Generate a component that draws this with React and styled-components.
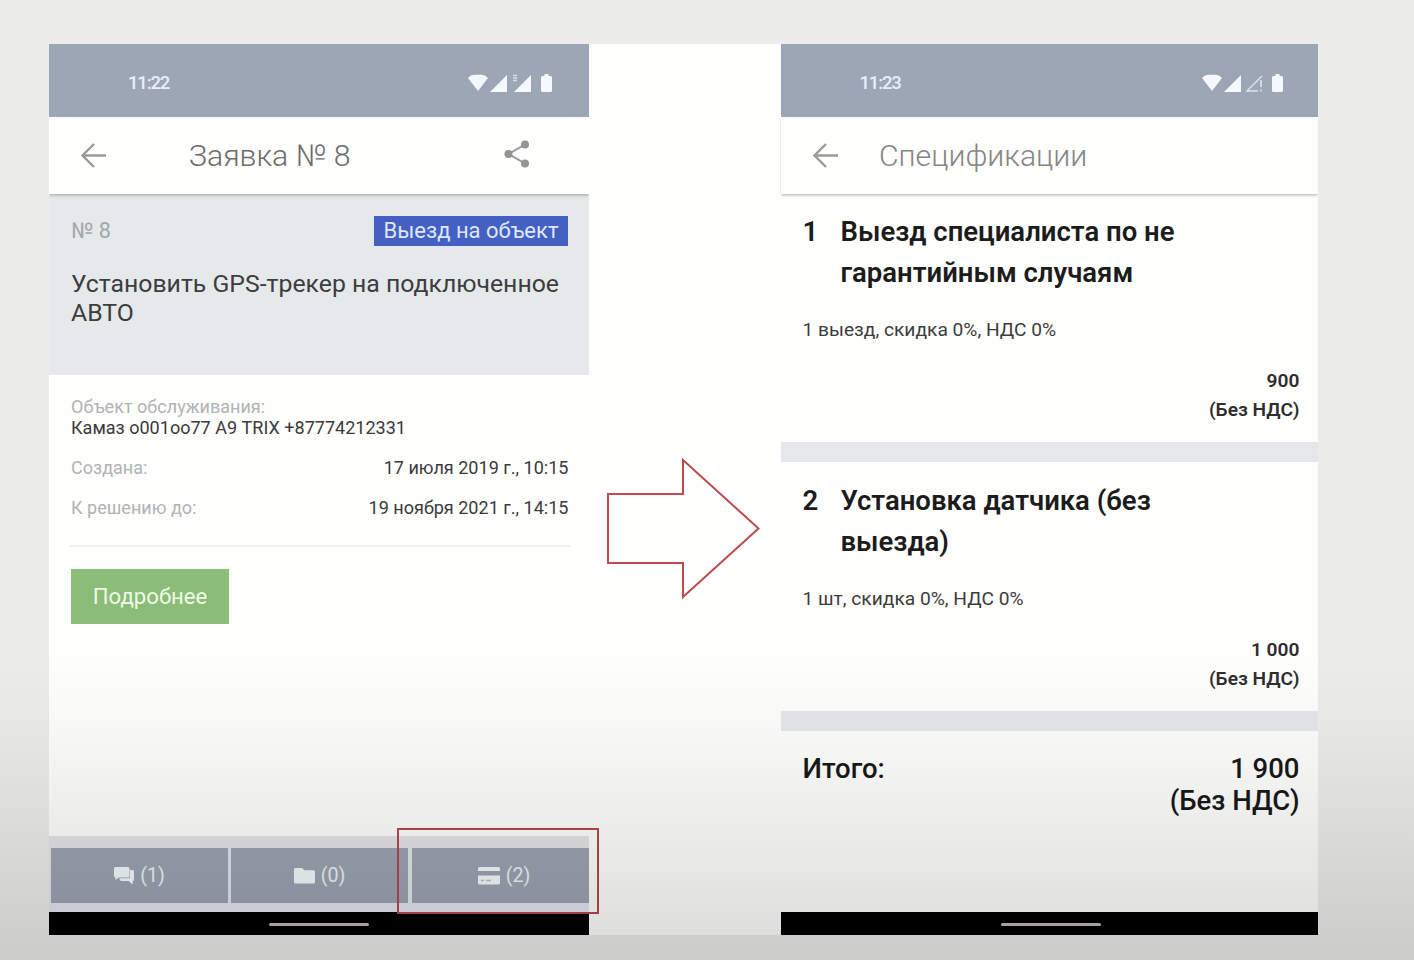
import React from "react";
import styled, { createGlobalStyle } from "styled-components";

const GlobalStyle = createGlobalStyle`
  * { box-sizing: border-box; }
  html, body { margin: 0; padding: 0; }
  body { font-family: Roboto, "Noto Sans", sans-serif; background: #ececeb; overflow: hidden; }
`;

const Stage = styled.main`
  position: relative;
  width: 1414px;
  height: 960px;
  padding: 44px 96px 25px 49px;
  background: #ececeb;
`;

const Shade = styled.div`
  position: absolute;
  inset: 0;
  pointer-events: none;
  background: linear-gradient(
    to bottom,
    rgba(0, 0, 0, 0) 650px,
    rgba(0, 0, 0, 0.015) 700px,
    rgba(0, 0, 0, 0.035) 750px,
    rgba(0, 0, 0, 0.08) 840px,
    rgba(0, 0, 0, 0.115) 910px,
    rgba(0, 0, 0, 0.137) 960px
  );
`;

const Slide = styled.div`
  display: grid;
  grid-template-columns: 540px 191.5px 537.5px;
  width: 1269px;
  height: 891px;
  background: #fefefd;
`;

const Phone = styled.section`
  display: flex;
  flex-direction: column;
  height: 891px;
  min-width: 0;
`;

const StatusBar = styled.div`
  display: flex;
  align-items: center;
  justify-content: space-between;
  flex: none;
  height: 73px;
  padding: 4px ${(p) => p.$right}px 0 79px;
  background: #9da6b5;
`;

const Clock = styled.span`
  font-size: 18.5px;
  line-height: 24px;
  font-weight: 500;
  letter-spacing: -1.15px;
  color: #e6f0fc;
`;

const StatusIcon = styled.svg`
  display: block;
  overflow: visible;
`;

const AppBar = styled.header`
  position: relative;
  display: flex;
  align-items: center;
  flex: none;
  height: 77px;
  padding: 0 59px 0 31px;
  background: #fefefd;
  box-shadow: 0 1px 3px rgba(70, 70, 60, 0.45);
  clip-path: inset(0 0 -8px 0);
`;

const AppTitle = styled.h1`
  flex: 1;
  margin: 0 0 0 ${(p) => p.$gap}px;
  font-size: 30.2px;
  line-height: 40px;
  font-weight: 300;
  color: ${(p) => p.$color};
`;

const Summary = styled.div`
  flex: none;
  height: 181px;
  padding: 22px 21px 0 22px;
  background: #e6e9ea;
`;

const SummaryTop = styled.div`
  display: flex;
  align-items: center;
  justify-content: space-between;
  height: 30px;
`;

const TicketNo = styled.span`
  font-size: 21.7px;
  line-height: 30px;
  color: #a4a7a9;
`;

const Badge = styled.span`
  height: 30px;
  padding: 0 9.5px;
  font-size: 22px;
  line-height: 30px;
  color: #dfe6fa;
  background: #4460c3;
`;

const Description = styled.p`
  margin: 23px 0 0;
  font-size: 24.8px;
  line-height: 29px;
  white-space: nowrap;
  color: #3b3d3f;
`;

const Details = styled.div`
  flex: 1;
  padding: 21px 20.5px 0 22px;
`;

const Label = styled.span`
  font-size: 18.05px;
  line-height: 21px;
  color: #b1b3b5;
`;

const Value = styled.span`
  font-size: 18.05px;
  line-height: 21px;
  color: #3a3a3c;
`;

const Stack = styled.div`
  display: flex;
  flex-direction: column;
`;

const DetailRow = styled.div`
  display: flex;
  justify-content: space-between;
  margin-top: 19px;
`;

const Divider = styled.hr`
  height: 2px;
  margin: 27px -1px 22px -1px;
  border: 0;
  background: #f2f2f2;
`;

const MoreButton = styled.button`
  display: block;
  width: 158px;
  height: 55px;
  padding: 0;
  border: 0;
  font: 400 22.2px/55px Roboto, "Noto Sans", sans-serif;
  color: #eefbe6;
  background: #8bbc78;
`;

const Tabs = styled.nav`
  display: grid;
  grid-template-columns: 177px 177px 177px;
  column-gap: 3px;
  flex: none;
  height: 76px;
  padding: 12px 0 9px 2px;
  background: linear-gradient(to bottom, #e2e4e5, #e2e6ed);
`;

const Tab = styled.div`
  display: flex;
  align-items: center;
  justify-content: center;
  gap: 5px;
  margin-left: ${(p) => p.$shift || 0}px;
  margin-right: ${(p) => -(p.$shift || 0)}px;
  padding-left: ${(p) => p.$indent || 0}px;
  font-size: 19.6px;
  color: #eef2f6;
  background: #9ca4b2;
`;

const NavBar = styled.footer`
  display: flex;
  align-items: center;
  justify-content: center;
  flex: none;
  height: 23px;
  padding-left: ${(p) => p.$offset || 0}px;
  background: #000;
`;

const NavPill = styled.i`
  width: 100px;
  height: 3px;
  margin-top: 2px;
  border-radius: 2px;
  background: #bcb6b6;
`;

const ArrowCell = styled.div`
  display: flex;
  justify-content: center;
  padding: 413px 4px 0 0;
`;

const Highlight = styled.div`
  position: absolute;
  left: 397px;
  top: 828px;
  width: 202px;
  height: 86px;
  border: 2px solid #b4474e;
`;

const SpecItem = styled.article`
  display: flex;
  flex-direction: column;
  flex: none;
  height: ${(p) => p.$height}px;
  padding: ${(p) => p.$top}px 18.5px 0 22px;
`;

const SpecHead = styled.div`
  display: grid;
  grid-template-columns: 38px 1fr;
  font-size: 27.5px;
  line-height: 41px;
  font-weight: 600;
  color: #1c1c1c;
`;

const SpecMeta = styled.div`
  margin-top: 25px;
  font-size: 19.2px;
  line-height: 24px;
  color: #3c3c3c;
`;

const SpecPrice = styled.div`
  margin-top: 25px;
  font-size: 19.2px;
  line-height: 28.5px;
  font-weight: 600;
  text-align: right;
  color: #2e2e2e;
`;

const Band = styled.div`
  flex: none;
  height: 20px;
  background: #e5e8ea;
`;

const Total = styled.div`
  display: flex;
  justify-content: space-between;
  flex: 1;
  padding: 22px 18.5px 0 22px;
  font-size: 27.5px;
  line-height: 32px;
  font-weight: 500;
  color: #181818;
`;

const TotalSum = styled.div`
  text-align: right;
`;

const BackIcon = () => (
  <svg width="27" height="27" viewBox="0 0 27 27" fill="none" stroke="#9b9b9a" strokeWidth="2.4">
    <path d="M26 13.5H3M14 2L2.5 13.5L14 25" />
  </svg>
);

const ShareMark = styled.svg`
  margin-bottom: 4px;
`;

const ShareIcon = () => (
  <ShareMark width="26" height="28" viewBox="0 0 26 28" fill="#949494">
    <path d="M21 4.5L4.5 14L21 23.5" fill="none" stroke="#949494" strokeWidth="2" />
    <circle cx="21" cy="4.5" r="4" />
    <circle cx="4.5" cy="14" r="4" />
    <circle cx="21" cy="23.5" r="4" />
  </ShareMark>
);

const WIFI = "M0 4Q3 0.8 6 0.8H14Q17 0.8 20 4L10 17Z";
const BATTERY = "M3.5 2V0H7.5V2H9.5Q11 2 11 3.5V16.5Q11 18 9.5 18H1.5Q0 18 0 16.5V3.5Q0 2 1.5 2Z";

const StatusLeft = () => (
  <StatusIcon width="84" height="18" viewBox="0 0 84 18" fill="#f3f9ff">
    <path d={WIFI} />
    <path d="M22 18L39 1V18Z" />
    <path d="M46 18L63 1V18Z" />
    <path d="M45 1.5H49M45 4H49M45 6.5H49" stroke="#d7dfeb" strokeWidth="1.5" />
    <path d={BATTERY} transform="translate(73 0)" />
  </StatusIcon>
);

const StatusRight = () => (
  <StatusIcon width="81" height="18" viewBox="0 0 81 18" fill="#f3f9ff">
    <path d={WIFI} />
    <path d="M22 18L39 1V18Z" />
    <path d="M60 2L45 17H56" fill="none" stroke="#dde5f0" strokeWidth="1.4" />
    <path d="M59 6V13M59 15.5V17.5" stroke="#dde5f0" strokeWidth="1.6" />
    <path d={BATTERY} transform="translate(70 0)" />
  </StatusIcon>
);

const ChatIcon = () => (
  <svg width="21" height="18" viewBox="0 0 21 18" fill="#f5fafc">
    <path d="M1.5 0H14Q15.5 0 15.5 1.5V9Q15.5 10.5 14 10.5H5L1.5 13V10.5Q0 10.5 0 9V1.5Q0 0 1.5 0Z" />
    <path d="M16 3H18.5Q20 3 20 4.5V12.5Q20 14 18.8 14V17.5L14.5 14H7Q5.5 14 5.5 11.2H15Q16 11.2 16 10Z" />
  </svg>
);

const FolderIcon = () => (
  <svg width="22" height="16" viewBox="0 0 22 16" fill="#f5fafc">
    <path d="M1.5 0H8L10.5 2.3H19.5Q21 2.3 21 3.8V14Q21 15.5 19.5 15.5H1.5Q0 15.5 0 14V1.5Q0 0 1.5 0Z" />
  </svg>
);

const CardIcon = () => (
  <svg width="23" height="18" viewBox="0 0 23 18" fill="#f5fafc">
    <path d="M1.5 0H20.5Q22 0 22 1.5V4H0V1.5Q0 0 1.5 0Z" />
    <path d="M0 8.500H22V16Q22 17.5 20.5 17.5H1.5Q0 17.5 0 16Z" />
    <path d="M3 13.5H6M8 13.5H13" stroke="#b8bfca" strokeWidth="1.5" />
  </svg>
);

const Item = ({ no, title, meta, price, height, top }) => (
  <SpecItem $height={height} $top={top}>
    <SpecHead>
      <span>{no}</span>
      <span>
        {title[0]}
        <br />
        {title[1]}
      </span>
    </SpecHead>
    <SpecMeta>{meta}</SpecMeta>
    <SpecPrice>
      {price}
      <br />
      (Без НДС)
    </SpecPrice>
  </SpecItem>
);

export default function App() {
  return (
    <Stage>
      <GlobalStyle />
      <Slide>
        <Phone>
          <StatusBar $right={37}>
            <Clock>11:22</Clock>
            <StatusLeft />
          </StatusBar>
          <AppBar>
            <BackIcon />
            <AppTitle $gap={82} $color="#6c6c6c">Заявка № 8</AppTitle>
            <ShareIcon />
          </AppBar>
          <Summary>
            <SummaryTop>
              <TicketNo>№ 8</TicketNo>
              <Badge>Выезд на объект</Badge>
            </SummaryTop>
            <Description>
              Установить GPS-трекер на подключенное
              <br />
              АВТО
            </Description>
          </Summary>
          <Details>
            <Stack>
              <Label>Объект обслуживания:</Label>
              <Value>Камаз о001оо77 А9 TRIX +87774212331</Value>
            </Stack>
            <DetailRow>
              <Label>Создана:</Label>
              <Value>17 июля 2019 г., 10:15</Value>
            </DetailRow>
            <DetailRow>
              <Label>К решению до:</Label>
              <Value>19 ноября 2021 г., 14:15</Value>
            </DetailRow>
            <Divider />
            <MoreButton>Подробнее</MoreButton>
          </Details>
          <Tabs>
            <Tab><ChatIcon /> (1)</Tab>
            <Tab><FolderIcon /> (0)</Tab>
            <Tab $shift={1} $indent={7}><CardIcon /> (2)</Tab>
          </Tabs>
          <NavBar><NavPill /></NavBar>
        </Phone>
        <ArrowCell>
          <svg width="156" height="144" viewBox="0 0 156 144" fill="none" stroke="#bd4a50" strokeWidth="2">
            <path d="M3 37H78V3L153.5 71.5L78 140V106H3Z" />
          </svg>
        </ArrowCell>
        <Phone>
          <StatusBar $right={35}>
            <Clock>11:23</Clock>
            <StatusRight />
          </StatusBar>
          <AppBar>
            <BackIcon />
            <AppTitle $gap={40.5} $color="#858585">Спецификации</AppTitle>
          </AppBar>
          <Item
            no="1"
            title={["Выезд специалиста по не", "гарантийным случаям"]}
            meta="1 выезд, скидка 0%, НДС 0%"
            price="900"
            height={248}
            top={17}
          />
          <Band />
          <Item
            no="2"
            title={["Установка датчика (без", "выезда)"]}
            meta="1 шт, скидка 0%, НДС 0%"
            price="1 000"
            height={249}
            top={18}
          />
          <Band />
          <Total>
            <span>Итого:</span>
            <TotalSum>
              1 900
              <br />
              (Без НДС)
            </TotalSum>
          </Total>
          <NavBar $offset={3}><NavPill /></NavBar>
        </Phone>
      </Slide>
      <Highlight />
      <Shade />
    </Stage>
  );
}
